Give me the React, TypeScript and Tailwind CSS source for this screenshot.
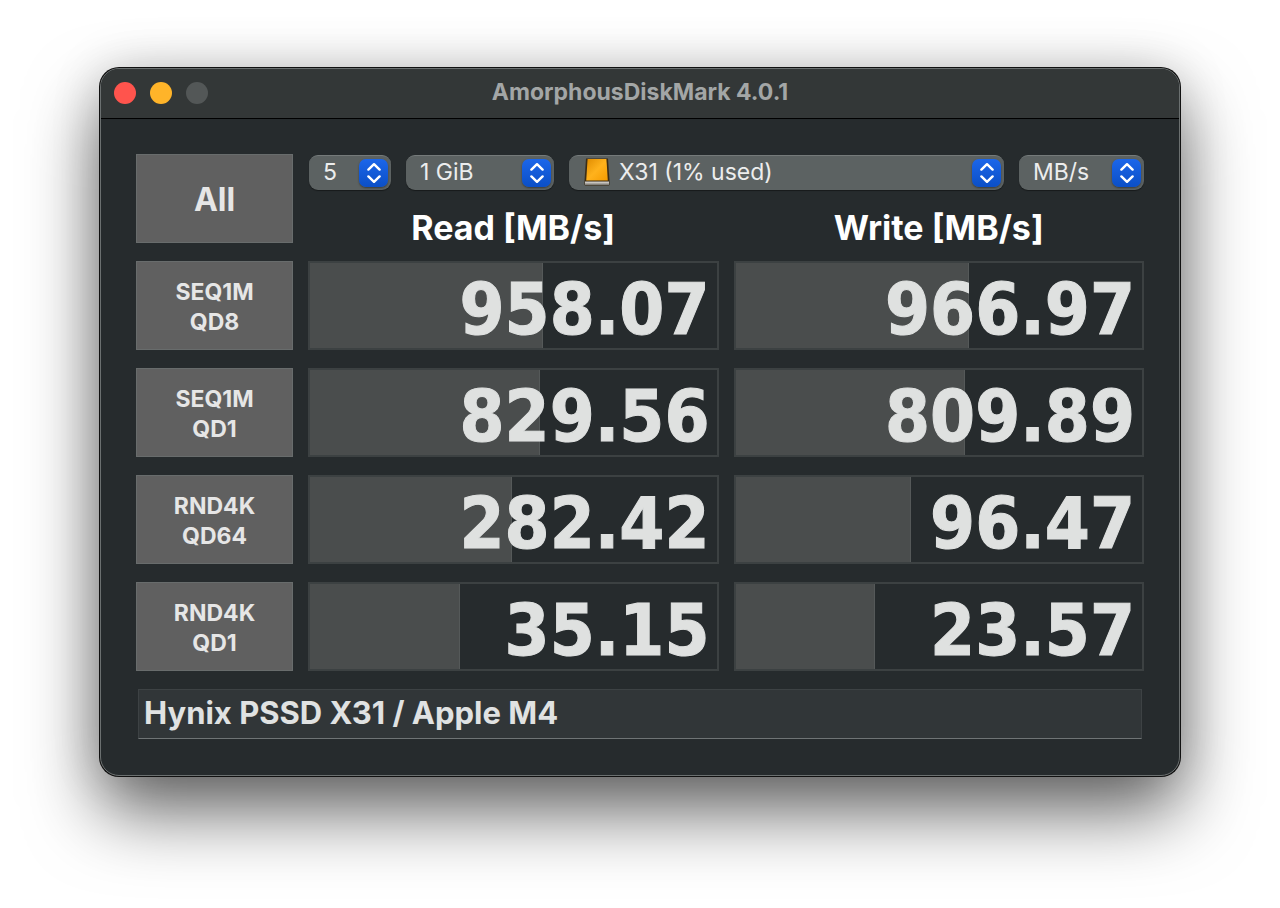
import { useState } from "react";
import type { ReactNode } from "react";

type Result = { value: string; fill: number };
type Test = { mode: string; queue: string; read: Result; write: Result };

const tests: Test[] = [
  { mode: "SEQ1M", queue: "QD8", read: { value: "958.07", fill: 57.4 }, write: { value: "966.97", fill: 57.4 } },
  { mode: "SEQ1M", queue: "QD1", read: { value: "829.56", fill: 56.5 }, write: { value: "809.89", fill: 56.4 } },
  { mode: "RND4K", queue: "QD64", read: { value: "282.42", fill: 49.8 }, write: { value: "96.47", fill: 43.2 } },
  { mode: "RND4K", queue: "QD1", read: { value: "35.15", fill: 36.8 }, write: { value: "23.57", fill: 34.4 } },
];

const DriveIcon = () => (
  <svg width="26" height="28" viewBox="0 0 26 28" aria-hidden="true">
    <defs>
      <linearGradient id="drive-top" x1="0" y1="0" x2="1" y2="1">
        <stop offset="0" stopColor="#e08c00" />
        <stop offset="0.5" stopColor="#ffb21c" />
        <stop offset="1" stopColor="#f59b00" />
      </linearGradient>
    </defs>
    <path d="M2 0.5h22l1.5 22.5v3.5q0 1-1 1h-23q-1 0-1-1V23z" fill="#3a2c17" />
    <path d="M3.6 1h18.8l1.4 21.5H2.2z" fill="url(#drive-top)" />
    <path d="M1 23.5h24v2.5q0 0.8-0.8 0.8H1.8Q1 26.8 1 26z" fill="#c9c6c1" />
    <path d="M1 25.5h24v0.8q0 0.7-0.8 0.7H1.8Q1 27 1 26.3z" fill="#85827d" />
  </svg>
);

type PopupProps = { label: string; options: string[]; className: string; icon?: ReactNode };

const Popup = ({ label, options, className, icon }: PopupProps) => (
  <div className={`relative h-[35px] ${className}`}>
    <select
      aria-label={label}
      className={`block h-full w-full appearance-none rounded-[9px] border-t border-[#757a7a] bg-[#5c6262] pr-9 pb-[2px] text-[23px] leading-7 text-[#eceded] shadow-[0_1px_1px_rgba(0,0,0,0.4)] outline-none ${icon ? "pl-[50px]" : "pl-[14px]"}`}
    >
      {options.map((option) => (
        <option key={option}>{option}</option>
      ))}
    </select>
    {icon && <span className="pointer-events-none absolute top-[3px] left-[15px]">{icon}</span>}
    <span className="pointer-events-none absolute top-1 right-[3px] flex h-7 w-[29px] items-center justify-center rounded-[7px] bg-gradient-to-b from-[#1b66ea] to-[#0b4fc6] shadow-[0_1px_2px_rgba(0,0,0,0.4)]">
      <svg width="14" height="20" viewBox="0 0 14 20" fill="none" stroke="#fff" strokeWidth="2.4" strokeLinecap="round" strokeLinejoin="round" aria-hidden="true">
        <path d="M1.4 6.6 7 1.2l5.6 5.4M1.4 13.4l5.6 5.4 5.6-5.4" />
      </svg>
    </span>
  </div>
);

const Meter = ({ value, fill }: Result) => (
  <div className="relative h-[89px] border-2 border-[#3c4142]">
    <div className="absolute inset-y-0 left-0 border-r border-[#555959] bg-[#4a4d4d]" style={{ width: `${fill}%` }} />
    <div className="relative pr-[7px] text-right font-['DejaVu_Sans_Condensed','DejaVu_Sans',sans-serif] text-[72px] leading-[92px] font-bold text-[#dfe1e0] [-webkit-text-stroke:1px_#dfe1e0]">
      {value}
    </div>
  </div>
);

const runButton = "block w-full border border-[#686c6c] bg-[#606060] pt-[2px] font-bold text-[#e6e6e6]";

const App = () => {
  const [comment, setComment] = useState("Hynix PSSD X31 / Apple M4");

  return (
    <div className="min-h-screen bg-white px-[100px] pt-[68px] pb-[132px] font-['Inter',sans-serif]">
      <main className="overflow-hidden rounded-[19px] border border-[#6b7070] bg-[#262b2d] shadow-[0_0_0_1px_#111,0_36px_72px_rgba(0,0,0,0.6),0_0_50px_rgba(0,0,0,0.15)]">
        <header className="grid h-[50px] grid-cols-[1fr_auto_1fr] items-center border-b border-black bg-[#333737] px-[13px] pb-[2px]">
          <div className="flex gap-[14px]">
            <button aria-label="Close" className="size-[22px] rounded-full bg-[#ff544d]" />
            <button aria-label="Minimize" className="size-[22px] rounded-full bg-[#ffb429]" />
            <button aria-label="Zoom" disabled className="size-[22px] rounded-full bg-[#535757]" />
          </div>
          <h1 className="pb-[2px] text-[23px] leading-7 font-bold text-[#a3a6a6]">AmorphousDiskMark 4.0.1</h1>
        </header>

        <div className="px-5 pt-[17px] pb-9">
          <table className="w-full table-fixed border-separate border-spacing-x-[15px] border-spacing-y-[18px]">
            <colgroup>
              <col className="w-[157px]" />
              <col />
              <col />
            </colgroup>
            <thead>
              <tr>
                <td rowSpan={2} className="p-0">
                  <button className={`${runButton} h-[89px] text-[32px]`}>All</button>
                </td>
                <td colSpan={2} className="h-9 p-0">
                  <div className="flex gap-[15px] pl-px">
                    <Popup label="Test count" options={["5"]} className="w-[82px]" />
                    <Popup label="Test size" options={["1 GiB"]} className="w-[148px]" />
                    <Popup label="Drive" options={["X31 (1% used)"]} className="flex-1" icon={<DriveIcon />} />
                    <Popup label="Unit" options={["MB/s"]} className="w-[125px]" />
                  </div>
                </td>
              </tr>
              <tr className="text-[34px] leading-[31px] text-white">
                <th scope="col" className="p-0 pt-1 font-bold">Read [MB/s]</th>
                <th scope="col" className="p-0 pt-1 font-bold">Write [MB/s]</th>
              </tr>
            </thead>
            <tbody>
              {tests.map((test) => (
                <tr key={test.mode + test.queue}>
                  <th scope="row" className="p-0">
                    <button className={`${runButton} h-[89px] text-[23px] leading-[30px]`}>
                      {test.mode}
                      <br />
                      {test.queue}
                    </button>
                  </th>
                  <td className="p-0">
                    <Meter {...test.read} />
                  </td>
                  <td className="p-0">
                    <Meter {...test.write} />
                  </td>
                </tr>
              ))}
            </tbody>
          </table>
          <div className="px-[17px]">
            <input
              aria-label="Comment"
              value={comment}
              onChange={(e) => setComment(e.target.value)}
              className="block h-[50px] w-full border border-[#3d4244] border-b-[#6f7475] bg-[#313638] px-[5px] pb-[3px] text-[31px] font-bold text-[#e0e2e2] outline-none"
            />
          </div>
        </div>
      </main>
    </div>
  );
};

export default App;
